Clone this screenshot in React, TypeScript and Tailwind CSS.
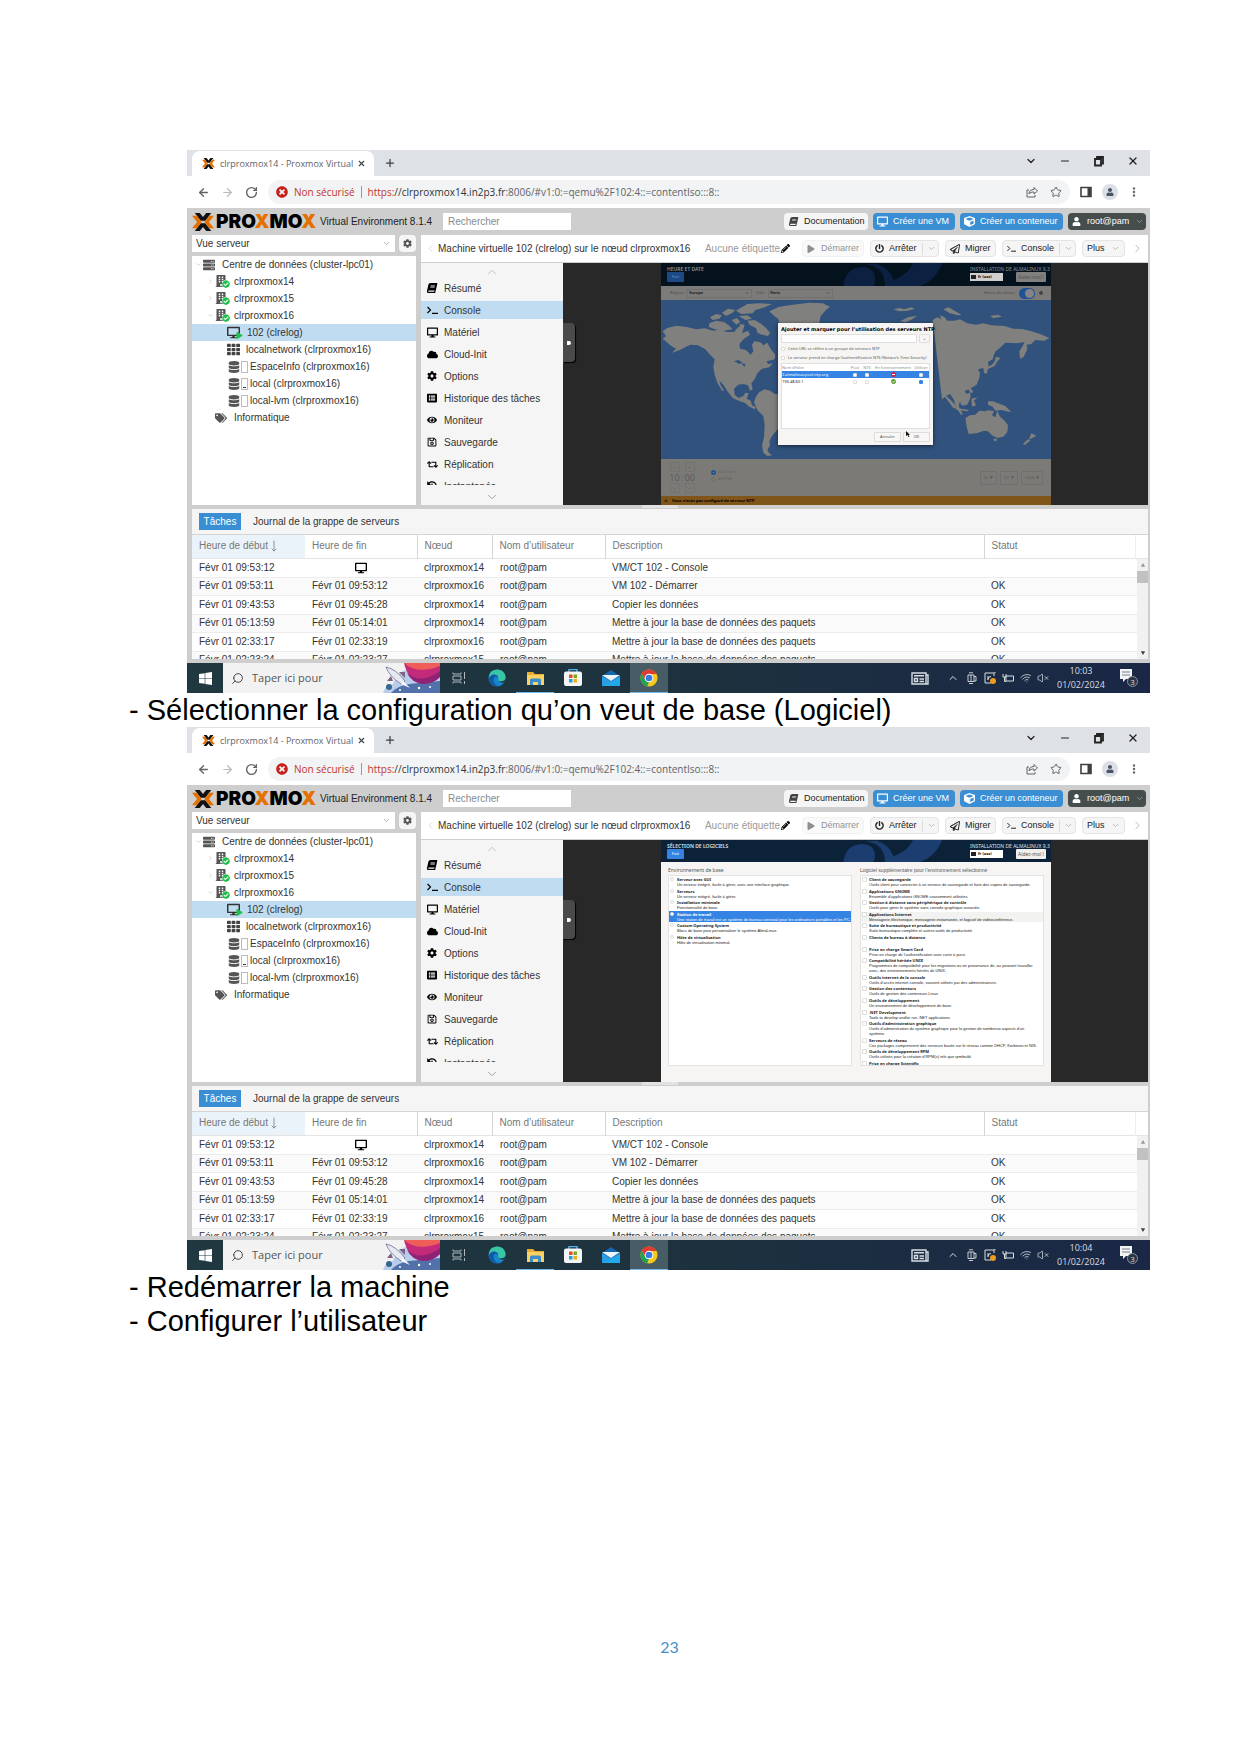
import type { ReactNode } from 'react';
import {
  ArrowLeft, ArrowRight, ChevronDown, ChevronLeft, ChevronRight, ChevronUp, EllipsisVertical,
  Minus, MoveDown, Plus, RotateCw, Search, Star, VolumeX, Wifi, X,
} from 'lucide-react';
import {
  FaBook, FaBuilding, FaCheckCircle, FaCloud, FaCog, FaCube, FaDatabase, FaDesktop, FaEye, FaHistory,
  FaListAlt, FaPencilAlt, FaPlay, FaPowerOff, FaRegPaperPlane, FaRegSave, FaRetweet, FaServer, FaTags,
  FaTh, FaTimesCircle, FaUser,
} from 'react-icons/fa';

const sans = "font-['Liberation_Sans',Arial,sans-serif]";
const segoe = "font-['Open_Sans','Noto_Sans',sans-serif]";

function ProxmoxMark({ className }: { className: string }) {
  return (
    <svg viewBox="0 0 24 20" preserveAspectRatio="none" className={className} aria-hidden="true">
      <path d="M3 0h5.500L12 4.500 15.500 0H21l-6.500 8.500h-5z" fill="#111" />
      <path d="M3 20h5.500l3.500-4.500 3.500 4.500H21l-6.500-8.500h-5z" fill="#111" />
      <path d="M0 3h5L10.500 10 5 17H0l5.500-7zM24 3h-5L13.500 10l5.500 7h5l-5.500-7z" fill="#e57000" />
    </svg>
  );
}

function Prompt({ className }: { className: string }) {
  return (
    <svg viewBox="0 0 11 8" className={className} fill="none" stroke="currentColor" strokeWidth="1.200" aria-hidden="true">
      <path d="M.5 1l3 3-3 3M5 7.300h6" />
    </svg>
  );
}

function TabStrip() {
  return (
    <div className={`flex h-[26px] items-stretch bg-[#dee1e6] pl-[5px] text-[#3c4043] ${segoe}`}>
      <div className="mt-px flex w-[182px] items-center rounded-t-lg bg-white pr-1.5 pl-2.5">
        <ProxmoxMark className="mr-[5px] h-[11px] w-[13px]" />
        <span className="text-[9px] whitespace-nowrap text-[#5f6368]">clrproxmox14 - Proxmox Virtual</span>
        <button aria-label="Fermer l’onglet" className="ml-auto p-0.5"><X size={9} strokeWidth={3} /></button>
      </div>
      <button aria-label="Nouvel onglet" className="ml-2.5"><Plus size={12} strokeWidth={2.500} /></button>
      <div className="ml-auto flex items-center gap-[22px] pr-[11px] pb-1 text-[#222]">
        <button aria-label="Onglets"><ChevronDown size={12} strokeWidth={2.500} /></button>
        <button aria-label="Réduire"><Minus size={12} strokeWidth={2} /></button>
        <button aria-label="Restaurer">
          <svg viewBox="0 0 12 12" className="size-3" fill="none" stroke="currentColor" strokeWidth="1.800"><path d="M2 4h6v6.500H2zM4 3V2h6v6.500H8.500" /></svg>
        </button>
        <button aria-label="Fermer"><X size={12} strokeWidth={2.500} /></button>
      </div>
    </div>
  );
}

function AddressBar() {
  return (
    <div className={`flex h-8 items-center gap-2.5 bg-white pr-2.5 pl-2.5 text-[#5f6368] ${segoe}`}>
      <button aria-label="Précédent"><ArrowLeft size={13} strokeWidth={2.500} /></button>
      <button aria-label="Suivant" className="ml-px text-[#b8bbbe]"><ArrowRight size={13} strokeWidth={2.200} /></button>
      <button aria-label="Actualiser" className="ml-px"><RotateCw size={13} strokeWidth={2.500} /></button>
      <div className="flex h-6 flex-1 items-center rounded-full bg-[#f1f3f4] px-2 text-[10px] whitespace-nowrap">
        <FaTimesCircle className="mr-1.5 size-3 shrink-0 text-[#c5221f]" />
        <span className="text-[#c5352b]">Non sécurisé</span>
        <span className="mx-1.5 h-3 w-px bg-[#999]" />
        <a href="#console" className="flex"><span className="text-[#c5352b]">https:</span><span className="text-[#303336]">//clrproxmox14.in2p3.fr</span>:8006/#v1:0:=qemu%2F102:4::=contentIso:::8::</a>
        <button aria-label="Partager" className="ml-auto"><svg viewBox="0 0 12 12" className="size-3" fill="none" stroke="currentColor"><path d="M3 4H1v7h8V9M3 8c0-3 2-4.500 5-4.500V1.500L11.500 5 8 8V6C6 6 4 6.500 3 8z" /></svg></button>
        <button aria-label="Favori" className="ml-3"><Star size={12} /></button>
      </div>
      <button aria-label="Panneau latéral"><svg viewBox="0 0 12 12" className="size-3"><path d="M1 1.500h10v9H1z" fill="none" stroke="#3c4043" strokeWidth="1.600" /><path d="M7.500 1.500H11v9H7.500z" fill="#3c4043" /></svg></button>
      <button aria-label="Profil" className="flex size-4 items-center justify-center rounded-full bg-[#dcdfe5] text-[#4a5468]"><FaUser size={8} /></button>
      <button aria-label="Menu"><EllipsisVertical size={12} strokeWidth={3} /></button>
    </div>
  );
}

function ProxmoxHeader() {
  const blue = 'flex h-[17px] items-center rounded-sm bg-[#3a8fd4] text-[9px] leading-none text-white [&_svg]:shrink-0';
  return (
    <div className="flex h-[27px] items-center bg-[#cecece] pr-1 pl-[5px] whitespace-nowrap">
      <ProxmoxMark className="h-[18px] w-[22px]" />
      <span className="ml-[2px] w-[103px] font-['Inter',sans-serif] text-[19px] leading-none font-black text-black">
        PRO<span className="text-[#e57000]">X</span>MO<span className="text-[#e57000]">X</span>
      </span>
      <span className="ml-px w-[123px] text-[10px] text-[#222]">Virtual Environment 8.1.4</span>
      <input aria-label="Rechercher" placeholder="Rechercher" className="h-[17px] w-[128px] bg-white px-[5px] text-[10px] placeholder:text-[#8a8a8a]" />
      <div className="ml-auto flex items-center gap-[5px]">
        <button className="flex h-[17px] w-[84px] items-center gap-[6px] rounded-sm bg-[#f5f5f5] px-[5px] text-[9px] leading-none text-[#222]"><FaBook size={9} className="shrink-0 -skew-x-12 text-[#444]" />Documentation</button>
        <button className={`${blue} w-[82px] gap-[5px] px-[4px]`}><FaDesktop size={11} />Créer une VM</button>
        <button className={`${blue} w-[103px] gap-[5px] px-[4px]`}><FaCube size={11} />Créer un conteneur</button>
        <button className="flex h-[17px] w-[78px] items-center gap-[6px] rounded-sm bg-[#464d4d] px-1 text-[9px] leading-none text-white"><FaUser size={9} className="shrink-0" />root@pam<ChevronDown size={9} className="ml-auto shrink-0 text-gray-400" /></button>
      </div>
    </div>
  );
}

type TreeItem = { label: string; kind: 'root' | 'node' | 'vm' | 'net' | 'storage' | 'tag'; open?: boolean; fill?: boolean };
const tree: TreeItem[] = [
  { label: 'Centre de données (cluster-lpc01)', kind: 'root' },
  { label: 'clrproxmox14', kind: 'node' },
  { label: 'clrproxmox15', kind: 'node' },
  { label: 'clrproxmox16', kind: 'node', open: true },
  { label: '102 (clrelog)', kind: 'vm' },
  { label: 'localnetwork (clrproxmox16)', kind: 'net' },
  { label: 'EspaceInfo (clrproxmox16)', kind: 'storage' },
  { label: 'local (clrproxmox16)', kind: 'storage', fill: true },
  { label: 'local-lvm (clrproxmox16)', kind: 'storage' },
  { label: 'Informatique', kind: 'tag' },
];

function TreeRow({ item }: { item: TreeItem }) {
  const base = 'flex h-[17px] items-center text-[10px] leading-none whitespace-nowrap text-[#333]';
  if (item.kind === 'root')
    return <li className={`${base} pl-[3px]`}><ChevronDown size={7} className="mr-px text-[#bbb]" /><FaServer size={12} className="mr-[7px] text-[#555]" />{item.label}</li>;
  if (item.kind === 'node')
    return (
      <li className={`${base} pl-[15px]`}>
        {item.open ? <ChevronDown size={7} className="text-[#bbb]" /> : <ChevronRight size={7} className="text-[#bbb]" />}
        <span className="relative mr-[6px] ml-px h-[13px] w-[13px] text-[#555]"><FaBuilding size={12} /><FaCheckCircle size={8} className="absolute right-[-2px] bottom-0 rounded-full bg-white text-[#21bf4b]" /></span>
        {item.label}
      </li>
    );
  if (item.kind === 'vm')
    return (
      <li className={`${base} bg-[#c0dcf1] pl-[35px]`}>
        <span className="relative mr-[6px] w-[14px] text-[#333]"><FaDesktop size={13} /><FaPlay size={7} className="absolute right-[-2px] bottom-0 text-[#21bf4b]" /></span>
        {item.label}
      </li>
    );
  if (item.kind === 'net')
    return <li className={`${base} pl-[35px]`}><FaTh size={13} className="mr-[6px] text-[#444]" />{item.label}</li>;
  if (item.kind === 'storage')
    return (
      <li className={`${base} pl-[36px]`}>
        <FaDatabase size={12} className="mr-px text-[#555]" />
        <span className="mr-[2px] flex h-3 w-[7px] items-end border border-[#bbb] p-px">{item.fill && <span className="h-px w-full bg-[#333]" />}</span>
        {item.label}
      </li>
    );
  return <li className={`${base} pl-[23px]`}><FaTags size={12} className="mr-[7px] text-[#555]" />{item.label}</li>;
}

const menu: [string, ReactNode][] = [
  ['Résumé', <FaBook size={10} className="-skew-x-12" />],
  ['Console', <Prompt className="h-2 w-[11px]" />],
  ['Matériel', <FaDesktop size={11} />],
  ['Cloud-Init', <FaCloud size={11} />],
  ['Options', <FaCog size={10} />],
  ['Historique des tâches', <FaListAlt size={10} />],
  ['Moniteur', <FaEye size={10} />],
  ['Sauvegarde', <FaRegSave size={10} />],
  ['Réplication', <FaRetweet size={11} />],
  ['Instantanés', <FaHistory size={10} />],
];

function SideMenu() {
  return (
    <nav className="flex w-[142px] shrink-0 flex-col items-center bg-[#f5f5f5]">
      <ChevronUp size={14} strokeWidth={1.500} className="mt-[2px] -mb-0.5 shrink-0 text-[#bbb]" />
      <ul className="h-[208px] w-full overflow-hidden">
        {menu.map(([label, icon]) => (
          <li key={label} className="flex h-[22px] items-center">
            <a href="#console" className={label === 'Console' ? 'flex h-[18px] w-full items-center bg-[#c0dcf1] pl-[6px] text-[10px] text-[#333]' : 'flex h-[18px] w-full items-center pl-[6px] text-[10px] text-[#333]'}>
              <span className="flex w-[17px] text-black">{icon}</span>{label}
            </a>
          </li>
        ))}
      </ul>
      <ChevronDown size={14} strokeWidth={1.500} className="mt-[5px] shrink-0 text-[#999]" />
    </nav>
  );
}

function VmToolbar() {
  const btn = 'flex h-[17px] shrink-0 items-center rounded-sm border border-[#e4e4e4] bg-[#f5f5f5] px-1 text-[9px] leading-none text-[#222] [&_svg]:shrink-0';
  return (
    <div className="flex h-[27px] items-center bg-white pr-1 pl-1 whitespace-nowrap text-[#333]">
      <ChevronLeft size={11} strokeWidth={1.500} className="text-[#ccc]" />
      <span className="ml-[2px] text-[10px]">Machine virtuelle 102 (clrelog) sur le nœud clrproxmox16</span>
      <div className="ml-auto flex items-center gap-[6px]">
        <span className="mr-[6px] flex items-center gap-px text-[10px] text-[#999]">Aucune étiquette<FaPencilAlt size={9} className="text-black" /></span>
        <button disabled className={`${btn} w-[62px] gap-[6px] opacity-50`}><FaPlay size={8} />Démarrer</button>
        <button className={`${btn} w-[69px] gap-[5px]`}><FaPowerOff size={9} />Arrêter<span className="ml-auto flex h-3 items-center border-l border-[#ddd] pl-1"><ChevronDown size={9} className="text-[#aaa]" /></span></button>
        <button className={`${btn} w-[51px] gap-[5px]`}><FaRegPaperPlane size={10} />Migrer</button>
        <button className={`${btn} w-[74px] gap-[5px]`}><Prompt className="h-[7px] w-[9px]" />Console<span className="ml-auto flex h-3 items-center border-l border-[#ddd] pl-1"><ChevronDown size={9} className="text-[#aaa]" /></span></button>
        <button className={`${btn} w-[43px] justify-between`}>Plus<ChevronDown size={9} className="text-[#aaa]" /></button>
        <ChevronRight size={13} strokeWidth={1.500} className="text-[#aaa]" />
      </div>
    </div>
  );
}

function InstallerHeader({ title, dim }: { title: string; dim: boolean }) {
  return (
    <div className={dim ? 'relative h-[23px] bg-[#04121e] text-[#8d949a]' : 'relative h-[23px] bg-[#0c2238] text-[#dfe5ea]'}>
      <svg viewBox="20 10 1167 68" preserveAspectRatio="none" className={dim ? 'absolute inset-0 size-full text-[#0c2142]' : 'absolute inset-0 size-full text-[#1b3d70]'} aria-hidden="true">
        <path d="M566 78Q572 24 622 22Q656 24 660 50 662 66 656 78z" fill="currentColor" />
        <path d="M630 14Q690 20 690 78H796Q840 62 862 10H774Q760 44 716 60 700 20 664 12z" fill="currentColor" />
      </svg>
      <div className="relative flex justify-between pt-[3px] pr-[5px] pl-[6px]">
        <div className="flex flex-col items-start">
          <span className="text-[5px] leading-[6px] font-semibold">{title}</span>
          <button className={dim ? 'h-[10px] w-[17px] rounded-[1px] bg-[#1d4a86] text-[4px] leading-none text-[#6f93c0]' : 'h-[10px] w-[17px] rounded-[1px] bg-[#3584e4] text-[4px] leading-none text-white'}>Fait</button>
        </div>
        <div className="flex w-[76px] flex-col items-stretch">
          <span className="text-[5px] leading-[6px] whitespace-nowrap">INSTALLATION DE ALMALINUX 9.3</span>
          <div className="flex items-center justify-between">
            <span className={dim ? 'flex h-2 w-[33px] items-center gap-[2px] bg-[#cfcfcf] px-px text-[4px] leading-none font-bold text-black' : 'flex h-2 w-[33px] items-center gap-[2px] bg-white px-px text-[4px] leading-none font-bold text-black'}><span className="h-1 w-[5px] bg-[#222]" />fr (oss)</span>
            <button className={dim ? 'h-[10px] w-[30px] rounded-[1px] bg-[#80807e] text-[5px] leading-none text-[#555]' : 'h-[10px] w-[30px] rounded-[1px] bg-[#f0efee] text-[5px] leading-none text-[#555]'}>Aidez-moi !</button>
          </div>
        </div>
      </div>
    </div>
  );
}

function WorldMap() {
  return (
    <svg viewBox="3 2 1170 477" preserveAspectRatio="none" className="block h-[159px] w-full bg-[#31527c]" aria-hidden="true">
      <g fill="#80807f">
        <path d="M8 118l10-8-10-14 14-10 26-7 28 3 34 8 24-3 26 7 22-4 18 8 22 0 14-16 14 6-4 14 18-8 6 12-18 12-14 16 2 14 18 4 14 14 8-10-4-18 6-12 18 2 10 10 12-8 12 22 12 14-2 14-24 6 4 8 14-2-10 12-22 4-14 14-8 18-10 12 4 18-8 4-6-16-14-4-16 2-12 12 2 18 12 10 14-6 6-10 10 2-6 16 12 6 4 14 12 6-4 6-16-8-14-12-18-6-18-8-14-18-14-22-12-12 4 14 10 16-6 0-14-24-8-24-4-24 4-22-16-16-12-14-22-12-22-2-14 6-18 10-24 8 12-12-14-8z" />
        <path d="M148 72l20-8 24 4 14 10 12 12-26 4-28-4-18-8zM150 54l18-10 18 4-8 10-20 4zM186 40l18-12 22 4-10 10-18 8zM215 62l16-6 10 12-12 8zM236 50l26-2 14 10-20 4zM228 34l20-12 14-8 34-2 40 2-22 10-28 8-8 10-34 2zM262 64l22-2 20 12 14 12 12 14-6 10-18-4-14-6-4-14-18-8zM240 74l14 2-4 14-12-6z" />
        <path d="M328 36l30-14 40-6 50-6 40 2 22 10-12 10-16 18-6 30H362l-8-22-14-10z" />
        <path d="M298 278l16-8 16 4 14 10 14 0v100l-10 12-12 14-8 16 2 12-8 14 6 10 8 6-14 2-12-10-4-22 6-24 2-38-4-26-18-18-10-24 6-16z" />
        <path d="M818 62l14-8 12 6-4-12 12 4 10 12 20 0 18-4 22 12 26 4 22-4 24 6 40 2 26 8 30 2 24 6 32 10 22 10-16 8-26-2-12 12-14 2 2 14-12 24-10 4-2-22 12-20 4-8-24 4-34-2-14 14-18 14-6 22-14 8 2 14-6 22-8-4-2-14-16 4 6 12-2 14-8 20-22 14-14 4 8 18 2 16-12 12-12-14-4 14 12 24-4 4-16-24-6-22-12-18-12 6-12 10z" />
        <path d="M1000 134l8 4-4 26-6-2zM1008 172l14 4-10 10-8 14-18 8-6-4 16-8 8-10zM850 30l16-6 20 12 18 10-10 2-24-6zM720 66l24-12 28-5-18 12-18 8zM700 30l20-4 12 4 22-6 10 4-20 6-26 2zM990 50l24-4 12 6-26 4zM908 268l8 0 0 6-6 0zM922 246l8 4 0 14 10 14-8 4-8-14zM848 284l14 8 24 24 4 12-10-2-18-24zM886 326l20 2 20 4-2 4-34-4zM898 300l18-16 14-4 2 14-10 22-18 2zM934 298l18-4-10 10 6 14-12 4zM984 306l14 0 16 6 22 8 18 18-16-2-12-4-20 2-8-12-14-6z" />
        <path d="M916 356l14-8 16-2 12-12 20 2 6-4 18 4-6 12 10 6 6-20 8 18 12 10 12 16-2 20-12 14-18 4-16-8-12-12-12-2-22 8-24 2-6-22zM1000 418l12 0-4 8-6-2zM1114 402l10 4 4 4-18 10-2-4zM1104 420l8 2-16 14-8-2z" />
      </g>
      <path d="M222 186l14-4 12 8-10 4zM246 192l10 2-2 8-6-4z" fill="#31527c" />
    </svg>
  );
}

function TimeBox({ label }: { label: string }) {
  return (
    <div className="flex w-[11px] flex-col items-center gap-[1px] text-[#5b5b58]">
      <button aria-label={`Augmenter ${label}`} className="flex size-[10px] items-center justify-center rounded-[1px] border border-[#73726f]"><ChevronUp size={5} /></button>
      <span className="text-[9px] leading-[9px]">{label}</span>
      <button aria-label={`Diminuer ${label}`} className="flex size-[10px] items-center justify-center rounded-[1px] border border-[#73726f]"><ChevronDown size={5} /></button>
    </div>
  );
}

const box = 'size-1 shrink-0 appearance-none rounded-[1px] border border-[#ddd] bg-white checked:border-[#3584e4] checked:bg-[#3584e4]';

function NtpDialog() {
  return (
    <div role="dialog" aria-label="Serveurs NTP" className="absolute top-[60px] left-[117px] flex h-[122px] w-[155px] flex-col bg-[#f6f5f4] px-[3px] pt-[2px] pb-[3px] text-[4px] leading-none text-[#555] shadow-[0_1px_4px_rgba(0,0,0,0.6)]">
      <h2 className="font-['DejaVu_Sans',sans-serif] text-[5px] leading-[8px] font-bold whitespace-nowrap text-black">Ajouter et marquer pour l’utilisation des serveurs NTP</h2>
      <div className="mt-px flex gap-[2px]">
        <input aria-label="Serveur" className="h-[9px] min-w-0 flex-1 rounded-[1px] border border-[#e1dfdd] bg-white" />
        <button className="h-[9px] w-[11px] rounded-[1px] border border-[#e1dfdd]">+</button>
      </div>
      <label className="mt-[3px] flex h-[5px] items-center gap-[3px] whitespace-nowrap"><input type="checkbox" className={box} />Cette URL se réfère à un groupe de serveurs NTP</label>
      <label className="mt-[4px] mb-[3px] flex h-[5px] items-center gap-[3px] whitespace-nowrap"><input type="checkbox" className={box} />Le serveur prend en charge l’authentification NTS (Network Time Security)</label>
      <div className="flex-1 border border-[#e1dfdd] bg-white">
        <table className="w-full table-fixed border-collapse text-center">
          <colgroup><col /><col className="w-[12px]" /><col className="w-[12px]" /><col className="w-[40px]" /><col className="w-[16px]" /></colgroup>
          <thead><tr className="h-[7px] text-[#888]">{['Nom d’hôte', 'Pool', 'NTS', 'En fonctionnement', 'Utiliser'].map((h) => <th key={h} className="p-0 font-normal whitespace-nowrap first:text-left">{h}</th>)}</tr></thead>
          <tbody>
            <tr className="h-[7px] bg-[#3584e4] text-white">
              <td className="p-0 text-left">2.almalinux.pool.ntp.org</td>
              <td className="p-0"><input aria-label="Pool" type="checkbox" className={`${box} block mx-auto`} /></td>
              <td className="p-0"><input aria-label="NTS" type="checkbox" className={`${box} block mx-auto`} /></td>
              <td className="p-0"><span className="mx-auto flex size-[5px] items-center rounded-full bg-[#d3204a] p-px"><span className="h-px w-full bg-white" /></span></td>
              <td className="p-0"><input aria-label="Utiliser" type="checkbox" className={`${box} block mx-auto`} /></td>
            </tr>
            <tr className="h-[7px] text-[#222]">
              <td className="p-0 text-left">193.48.60.1</td>
              <td className="p-0"><input aria-label="Pool" type="checkbox" className={`${box} block mx-auto`} /></td>
              <td className="p-0"><input aria-label="NTS" type="checkbox" className={`${box} block mx-auto`} /></td>
              <td className="p-0"><FaCheckCircle size={5} className="mx-auto text-[#4c9a1d]" /></td>
              <td className="p-0"><input aria-label="Utiliser" type="checkbox" defaultChecked className={`${box} block mx-auto`} /></td>
            </tr>
          </tbody>
        </table>
      </div>
      <div className="mt-[3px] flex justify-end gap-[2px]">
        <button className="h-[10px] w-[27px] rounded-[1px] border border-[#dedcda] bg-[#f8f7f6]">Annuler</button>
        <button className="h-[10px] w-[27px] rounded-[1px] border border-[#dedcda] bg-[#f8f7f6]">OK</button>
      </div>
      <svg viewBox="0 0 8 12" className="absolute right-[23px] bottom-[8px] h-[6px] w-1" aria-hidden="true"><path d="M0 0l8 8H5l2 4-2 0-2-4-3 2z" fill="#111" /></svg>
    </div>
  );
}

function MiniSelect({ label, value, width }: { label: string; value: string; width: string }) {
  return (
    <label className="flex items-center gap-[2px]">
      {label}
      <span className={`relative flex h-[9px] items-center border border-[#70706e] ${width}`}>
        <select className="w-full appearance-none px-px text-[4px] leading-none font-bold text-[#222]"><option>{value}</option></select>
        <ChevronDown size={4} strokeWidth={4} className="absolute right-[2px]" />
      </span>
    </label>
  );
}

function DateScreen() {
  return (
    <div className="relative flex h-full w-[390px] flex-col font-['Noto_Sans',sans-serif]">
      <InstallerHeader title="HEURE ET DATE" dim />
      <div className="flex h-[14px] items-center gap-[4px] bg-[#7c7b79] pr-[8px] pl-[9px] text-[4px] leading-none text-[#4c4c4a]">
        <MiniSelect label="Région :" value="Europe" width="w-[65px]" />
        <MiniSelect label="Ville :" value="Paris" width="w-[65px]" />
        <span className="ml-auto">Heure du réseau</span>
        <button role="switch" aria-checked="true" aria-label="Heure du réseau" className="flex h-[11px] w-[16px] justify-end rounded-full bg-[#1f5297] p-px"><span className="size-[9px] rounded-full bg-[#858585]" /></button>
        <button aria-label="Configurer" className="text-[#333]"><FaCog size={4} /></button>
      </div>
      <WorldMap />
      <div className="flex flex-1 items-center bg-[#7b7a77] pr-[8px] pl-[8px]">
        <TimeBox label="10" /><span className="px-px text-[8px] leading-none text-[#5b5b58]">:</span><TimeBox label="00" />
        <div className="-mt-1 ml-[16px] flex flex-col gap-[2px] text-[4px] leading-none text-[#666663]">
          <label className="flex items-center gap-[2px]"><input type="radio" name="format" defaultChecked className="size-[5px] appearance-none rounded-full border-2 border-[#1f5297] bg-[#8fa6c5]" />24 heures</label>
          <label className="flex items-center gap-[2px]"><input type="radio" name="format" className="size-[5px] appearance-none rounded-full border border-[#70706e]" />AM/PM</label>
        </div>
        <div className="ml-auto flex gap-[3px] text-[4px] text-[#5b5b58]">
          {['01', '02', '2024'].map((v) => <button key={v} className="flex h-[14px] items-center gap-[2px] rounded-[1px] border border-[#70706e] px-[3px]">{v}<FaPlay size={3} className="rotate-90" /></button>)}
        </div>
      </div>
      <div className="flex h-[9px] items-center gap-[4px] bg-[#80551a] pl-[3px] text-[4px] leading-none font-bold text-black"><span>⚠</span>Vous n’avez pas configuré de serveur NTP</div>
      <NtpDialog />
    </div>
  );
}

const baseEnvironments = [
  ['Serveur avec GUI', 'Un serveur intégré, facile à gérer, avec une interface graphique.'],
  ['Serveurs', 'Un serveur intégré, facile à gérer.'],
  ['Installation minimale', 'Fonctionnalité de base.'],
  ['Station de travail', 'Une station de travail est un système de bureau convivial pour les ordinateurs portables et les PC.'],
  ['Custom Operating System', 'Blocs de base pour personnaliser le système AlmaLinux.'],
  ['Hôte de virtualisation', 'Hôte de virtualisation minimal.'],
];
const extras = [
  ['Client de sauvegarde', 'Outils client pour connecter à un serveur de sauvegarde et faire des copies de sauvegarde.'],
  ['Applications GNOME', 'Ensemble d’applications GNOME couramment utilisées.'],
  ['Gestion à distance sans périphérique de contrôle', 'Outils pour gérer le système sans console graphique associée.'],
  ['Applications Internet', 'Messagerie électronique, messagerie instantanée, et logiciel de vidéoconférence.'],
  ['Suite de bureautique et productivité', 'Suite bureautique complète et autres outils de productivité.'],
  ['Clients de bureau à distance', ''],
  ['Prise en charge Smart Card', 'Prise en charge de l’authentification avec carte à puce.'],
  ['Compatibilité héritée UNIX', 'Programmes de compatibilité pour les migrations ou en provenance de, ou pouvant travailler avec, des environnements hérités de UNIX.'],
  ['Outils internet de la console', 'Outils d’accès internet console, souvent utilisés par des administrateurs.'],
  ['Gestion des conteneurs', 'Outils de gestion des conteneurs Linux'],
  ['Outils de développement', 'Un environnement de développement de base.'],
  ['.NET Development', 'Tools to develop and/or run .NET applications'],
  ['Outils d’administration graphique', 'Outils d’administration du système graphique pour la gestion de nombreux aspects d’un système.'],
  ['Serveurs de réseau', 'Ces packages comprennent des serveurs basés sur le réseau comme DHCP, Kerberos et NIS.'],
  ['Outils de développement RPM', 'Outils utilisés pour la création d’RPM(s) tels que rpmbuild.'],
];

function SoftwareScreen() {
  return (
    <div className="flex h-full w-[390px] flex-col bg-[#f6f5f4] font-['Noto_Sans',sans-serif] text-[#222]">
      <InstallerHeader title="SÉLECTION DE LOGICIELS" dim={false} />
      <div className="grid flex-1 grid-cols-2 gap-2 px-[7px] pt-[5px] pb-[16px]">
        <section className="flex min-h-0 flex-col">
          <h3 className="text-[5px] leading-[7px] text-[#555]">Environnement de base</h3>
          <ul className="mt-px flex h-[191px] flex-col border border-[#e4e2e0] bg-white">
            {baseEnvironments.map(([name, text], i) => (
              <li key={name} className={i === 3 ? 'h-[11px] bg-[#3584e4] text-white' : 'h-[11px] odd:h-[12px]'}>
                <label className="flex items-start gap-[3px] pt-px pl-px">
                  <input type="radio" name="base" defaultChecked={i === 3} className="size-[4px] shrink-0 appearance-none rounded-full border border-[#ddd] bg-white" />
                  <span className="text-[4px] leading-[5px] whitespace-nowrap"><b className="block">{name}</b><span className="block font-['Liberation_Sans']">{text}</span></span>
                </label>
              </li>
            ))}
          </ul>
        </section>
        <section className="flex min-h-0 flex-col">
          <h3 className="font-['Liberation_Sans',sans-serif] text-[5px] leading-[7px] whitespace-nowrap text-[#555]">Logiciel supplémentaire pour l’environnement sélectionné</h3>
          <ul className="mt-px flex h-[191px] flex-col justify-between border border-[#e4e2e0] bg-white pt-px">
            {extras.map(([name, text], i) => (
              <li key={name} className={i === 3 ? 'bg-[#f2f2f1]' : i === 12 ? 'pr-3' : ''}>
                <label className="flex items-start gap-[2px] pl-px">
                  <input type="checkbox" className="size-[5px] shrink-0 appearance-none rounded-[1px] border border-[#ddd] bg-white" />
                  <span className="text-[4px] leading-[5px]"><b className="block">{name}</b><span className="block min-h-[5px] font-['Liberation_Sans']">{text}</span></span>
                </label>
              </li>
            ))}
            <li className="h-1 shrink-0 overflow-hidden">
              <label className="flex items-start gap-[2px] pl-px"><input type="checkbox" className="size-[5px] shrink-0 appearance-none border border-[#ddd]" /><b className="text-[4px] leading-[5px]">Prise en charge Scientific</b></label>
            </li>
          </ul>
        </section>
      </div>
    </div>
  );
}

const tasks = [
  ['Févr 01 09:53:12', '', 'clrproxmox14', 'VM/CT 102 - Console', ''],
  ['Févr 01 09:53:11', 'Févr 01 09:53:12', 'clrproxmox16', 'VM 102 - Démarrer', 'OK'],
  ['Févr 01 09:43:53', 'Févr 01 09:45:28', 'clrproxmox14', 'Copier les données', 'OK'],
  ['Févr 01 05:13:59', 'Févr 01 05:14:01', 'clrproxmox14', 'Mettre à jour la base de données des paquets', 'OK'],
  ['Févr 01 02:33:17', 'Févr 01 02:33:19', 'clrproxmox16', 'Mettre à jour la base de données des paquets', 'OK'],
  ['Févr 01 02:23:24', 'Févr 01 02:23:27', 'clrproxmox15', 'Mettre à jour la base de données des paquets', 'OK'],
];

function TaskLog() {
  return (
    <div className="bg-white text-[10px] text-[#333]">
      <div className="flex h-[25px] items-center gap-3 bg-[#f5f5f5] pl-[7px]">
        <button className="h-[17px] w-[42px] bg-[#3a8fd4] leading-none text-white">Tâches</button>
        <button className="leading-none">Journal de la grappe de serveurs</button>
      </div>
      <div className="relative h-[125px] overflow-hidden border-t border-[#d5d5d5]">
        <table className="w-full table-fixed border-collapse text-left leading-none whitespace-nowrap">
          <colgroup><col className="w-[113px]" /><col className="w-[112px]" /><col className="w-[75px]" /><col className="w-[113px]" /><col /><col className="w-[151px]" /><col className="w-[13px]" /></colgroup>
          <thead>
            <tr className="h-[23px] border-b border-[#e4e4e4] text-[#777]">
              <th className="bg-[#ebf3fa] p-0 pl-[7px] font-normal"><span className="flex items-center">Heure de début<MoveDown size={12} strokeWidth={1.800} className="text-[#888]" /></span></th>
              {['Heure de fin', 'Nœud', 'Nom d’utilisateur', 'Description', 'Statut', ''].map((h) => <th key={h} className="border-r border-[#d5d5d5] p-0 pl-[7px] font-normal last:border-r-0 nth-last-2:border-[#eee]">{h}</th>)}
            </tr>
          </thead>
          <tbody>
            {tasks.map(([start, end, node, description, status]) => (
              <tr key={start} className="border-b border-[#ececec] odd:h-[19px] even:h-[18px] even:bg-[#fafafa]">
                <td className="p-0 pl-[7px]">{start}</td>
                <td className="p-0 pl-[7px]">{end || <FaDesktop size={12} className="ml-[43px] text-black" />}</td>
                <td className="p-0 pl-[7px]">{node}</td>
                <td className="p-0 pl-[8px]">root@pam</td>
                <td className="p-0 pl-[7px]">{description}</td>
                <td className="p-0 pl-[7px]">{status}</td>
                <td className="p-0" />
              </tr>
            ))}
          </tbody>
        </table>
        <div className="absolute top-[24px] right-0 bottom-0 flex w-[11px] flex-col items-center bg-[#f1f1f1] pt-1">
          <FaPlay size={4} className="-rotate-90 text-[#999]" />
          <span className="mt-1 h-3 w-full bg-[#c1c1c1]" />
          <FaPlay size={4} className="mt-auto mb-1 rotate-90 text-[#444]" />
        </div>
      </div>
    </div>
  );
}

function SearchArt() {
  return (
    <svg viewBox="0 0 57 30" className="ml-auto h-[30px] w-[57px]" aria-hidden="true">
      <path d="M0 30Q2 22 10 21 14 8 26 6L40 4 57 10V30z" fill="#a9c3ea" opacity=".8" />
      <path d="M8 30Q14 23 26 21L57 18V30z" fill="#3f5f9f" opacity=".85" />
      <path d="M21 0H57V14Q50 21 40 21 25 18 21 0z" fill="#c32a7a" />
      <path d="M21 0Q34 12 57 3V0z" fill="#ee5d58" />
      <path d="M24 10Q38 22 57 8V14Q50 21 40 21 29 20 24 10z" fill="#8f2275" />
      <path d="M3 4Q13 6 22 18L18 21Q6 13 3 4z" fill="#e6e9f2" stroke="#6b6f91" strokeWidth=".8" />
      <path d="M8 13l-4 5 6 0zM16 9l6 0 0 6z" fill="#7d6484" />
      <path d="M20 18l7 7-9-4z" fill="#fff" />
      <circle cx="6" cy="24" r="3" fill="#37688d" />
      <circle cx="36" cy="25" r="1.200" fill="#fff" /><circle cx="47" cy="24" r="1" fill="#fff" /><circle cx="17" cy="27" r="1" fill="#fff" />
    </svg>
  );
}

function TaskIcon({ label, active, children }: { label: string; active?: 'open' | 'front'; children: ReactNode }) {
  const state = active === 'front' ? 'border-[#76b9ed] bg-[#485c66]' : active === 'open' ? 'border-[#76b9ed]' : 'border-transparent';
  return <button aria-label={label} className={`flex h-[30px] w-[38px] items-center justify-center border-b ${state}`}>{children}</button>;
}

function Taskbar({ time }: { time: string }) {
  return (
    <div className={`flex h-[30px] items-center bg-linear-to-r from-[#203840] via-[#1d323e] to-[#1a2746] ${segoe}`}>
      <button aria-label="Démarrer" className="flex h-full w-9 items-center justify-center">
        <svg viewBox="0 0 13 13" className="size-[13px]"><path d="M0 2l5.700-.8v5H0zM6.300 1.100L13 0v6.200H6.300zM0 6.800h5.700v5L0 11zM6.300 6.800H13V13l-6.700-1z" fill="#fff" /></svg>
      </button>
      <label className="flex h-full w-[217px] items-center bg-[#f2f2f2] pl-[8px] text-[#444]">
        <Search size={13} strokeWidth={1.800} className="mr-[8px] -scale-x-100" />
        <input placeholder="Taper ici pour" className="w-[76px] text-[11px] placeholder:text-[#555]" />
        <SearchArt />
      </label>
      <TaskIcon label="Vue des tâches"><svg viewBox="0 0 14 12" className="h-3 w-3.5" fill="none" stroke="#aeb8bd"><path d="M1 .5v1.500h8V.500M1 4h8v4H1zM1 11.500V10h8v1.500M12.500 0v7M12.500 9v3" /></svg></TaskIcon>
      <TaskIcon label="Edge"><svg viewBox="0 0 20 20" className="size-[18px]"><circle cx="10" cy="10" r="9.500" fill="#1685cc" /><path d="M1 10Q1 1 10 .5q8 0 9.500 8 0 5-5 5.500-4 0-3-3.500.5-4-4-4.500-5 0-6.500 4z" fill="#39c6a5" /><path d="M7 9q-3 7 4 10-9 0-10-8 2-5 6-5 4 .5 4 4-2-2-4-1z" fill="#1159a5" /><path d="M11 10q0 6 7 5l1-3q-2 2-5 2-3 0-3-4z" fill="#203840" /></svg></TaskIcon>
      <TaskIcon label="Explorateur" active="open"><svg viewBox="0 0 17 14" className="h-3.5 w-[17px]"><path d="M0 1h6l2 2h9v11H0z" fill="#e9ac32" /><path d="M0 4h17v10H0z" fill="#fbd261" /><path d="M3 14V9q0-1.500 1.500-1.500h8Q14 7.500 14 9v5h-3v-3H6v3z" fill="#3b8ec9" /></svg></TaskIcon>
      <TaskIcon label="Store"><svg viewBox="0 0 18 17" className="h-[17px] w-[18px]"><path d="M5 4V.5h8V4" fill="none" stroke="#4db4e8" strokeWidth="1.500" /><rect y="2.500" width="18" height="14.500" rx="2" fill="#f3f5f6" /><path d="M5 5.500h3.500V9H5z" fill="#e94a25" /><path d="M9.500 5.500H13V9H9.500z" fill="#7aac16" /><path d="M5 10h3.500v3.500H5z" fill="#239fde" /><path d="M9.500 10H13v3.500H9.500z" fill="#f3ad14" /></svg></TaskIcon>
      <TaskIcon label="Courrier"><svg viewBox="0 0 18 16" className="h-4 w-[18px]"><path d="M0 6l9-6 9 6v10H0z" fill="#1267ae" /><path d="M0 5h18l-9 6z" fill="#edf5fb" /><path d="M0 6l9 5.500L18 6v10H0z" fill="#2b9de3" /><path d="M0 16l18-8v8z" fill="#1ab1f0" opacity=".6" /></svg></TaskIcon>
      <TaskIcon label="Chrome" active="front"><svg viewBox="0 0 20 20" className="size-[18px]"><circle cx="10" cy="10" r="9.500" fill="#f8c91c" /><path d="M1.800 5A9.500 9.500 0 0 1 18.300 5.500H10L6 12z" fill="#de3c30" /><path d="M1.800 5l4.700 8 3.500 1.500-2 4.800A9.500 9.500 0 0 1 1.800 5z" fill="#24a253" /><circle cx="10" cy="10" r="4.800" fill="#fff" /><circle cx="10" cy="10" r="3.700" fill="#3c78e2" /></svg></TaskIcon>
      <div className="ml-auto flex items-center text-[#d8dee3]">
        <svg viewBox="0 0 18 13" className="mr-[18px] h-[13px] w-[18px]" fill="none" stroke="currentColor" strokeWidth="1.400"><path d="M1 1h14v11H1zM15 3h2v9h-2M3 3.700h10M3.500 6.500h3v3h-3zM8.500 7H13M8.500 9.500H13" /></svg>
        <ChevronUp size={12} className="mr-[8px]" />
        <svg viewBox="0 0 10 12" className="mr-[7px] h-3 w-2.5" fill="none" stroke="currentColor" strokeWidth=".9"><path d="M1 3h6v6.500H1zM7 4.500h2V9H7M4 3v6.500M2 .8h4M2 11.500h4" /></svg>
        <svg viewBox="0 0 12 12" className="mr-[6px] size-3" fill="none" stroke="currentColor"><path d="M10 4V1H1v10h6M10 1l1.500-.5M4 7.500q0-3 3-3M4 4v4" /><circle cx="9" cy="9" r="3" fill="#f09a20" stroke="none" /></svg>
        <svg viewBox="0 0 12 9" className="mr-[6px] h-[9px] w-3" fill="none" stroke="currentColor"><path d="M4 2h7.500v5H4zM1 0v3h3V0M2.500 3v4.500H4" /></svg>
        <Wifi size={12} strokeWidth={1.500} className="mr-[5px] -rotate-12" />
        <VolumeX size={12} strokeWidth={1.500} />
        <div className="ml-[2px] flex w-[60px] flex-col items-center text-[9px] leading-[14px]"><span>{time}</span><span>01/02/2024</span></div>
        <div className="relative mr-[12px] ml-[9px] h-[18px] w-[18px]">
          <svg viewBox="0 0 12 13" className="h-[13px] w-3"><path d="M0 0h12v10H6l-3 3v-3H0z" fill="#f2f4f5" /><path d="M2 3h8M2 6h8" stroke="#77818b" /></svg>
          <span className="absolute right-0 bottom-0 flex size-[11px] items-center justify-center rounded-full border border-[#89949d] bg-[#2b3443] text-[8px] leading-none">3</span>
        </div>
      </div>
    </div>
  );
}

function Desktop({ time, children }: { time: string; children: ReactNode }) {
  return (
    <div className={`w-full overflow-hidden ${sans}`}>
      <TabStrip />
      <AddressBar />
      <div className="bg-[#cecece]">
        <ProxmoxHeader />
        <div className="pr-[2px] pl-[5px]">
          <div className="flex h-[270px] gap-[5px]">
            <div className="flex w-[224px] shrink-0 flex-col">
              <div className="flex h-[17px] gap-1">
                <div className="relative flex-1 bg-white">
                  <select aria-label="Vue" className="h-[17px] w-full appearance-none pl-1 text-[10px] leading-none text-[#333]"><option>Vue serveur</option></select>
                  <ChevronDown size={9} className="absolute top-1 right-1 text-[#999]" />
                </div>
                <button aria-label="Réglages" className="flex w-[17px] items-center justify-center rounded-sm bg-[#f5f5f5] text-[#555]"><FaCog size={9} /></button>
              </div>
              <ul className="mt-1 flex-1 bg-white">{tree.map((item) => <TreeRow key={item.label} item={item} />)}</ul>
            </div>
            <div className="flex min-w-0 flex-1 flex-col">
              <VmToolbar />
              <div className="flex min-h-0 flex-1 border-t border-[#cecece]">
                <SideMenu />
                <div className="relative flex min-w-0 flex-1 justify-center bg-[#282828] pl-px">
                  {children}
                  <button aria-label="Ouvrir le panneau" className="absolute top-[60px] left-0 flex h-[39px] w-3 items-center justify-center rounded-r-sm bg-[#4a4a4a] shadow-[1px_1px_1px_#000]"><span className="h-1 w-1 rounded-r-full bg-white" /></button>
                </div>
              </div>
            </div>
          </div>
          <div className="flex h-1 justify-center pr-5"><span className="h-[3px] w-9 bg-[#e2e2e2]" /></div>
          <TaskLog />
        </div>
        <div className="h-1" />
      </div>
      <Taskbar time={time} />
    </div>
  );
}

export default function App() {
  return (
    <main className={`flex min-h-[1756px] flex-col bg-white pt-[150px] pr-[91px] pl-[129px] text-[29px] leading-[34px] text-black ${sans}`}>
      <div className="pl-[58px] text-[10px] leading-normal"><Desktop time="10:03"><DateScreen /></Desktop></div>
      <p>- Sélectionner la configuration qu’on veut de base (Logiciel)</p>
      <div className="pl-[58px] text-[10px] leading-normal"><Desktop time="10:04"><SoftwareScreen /></Desktop></div>
      <p>- Redémarrer la machine</p>
      <p>- Configurer l’utilisateur</p>
      <footer className="mt-auto pb-[92px] pl-[60px] text-center font-['Lato',sans-serif] text-base leading-[34px] text-[#4a8fc7]">23</footer>
    </main>
  );
}
